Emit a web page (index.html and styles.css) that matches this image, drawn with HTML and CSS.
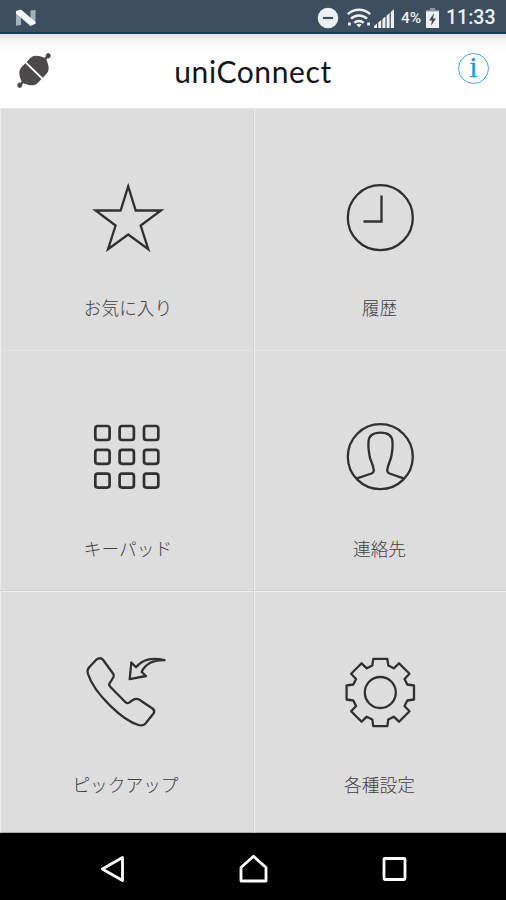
FILE: index.html
```html
<!DOCTYPE html>
<html lang="ja">
<head>
  <meta charset="UTF-8" />
  <meta name="viewport" content="width=device-width, initial-scale=1.0" />
  <title>uniConnect</title>
  <link rel="stylesheet" href="styles.css">
</head>
<body>
  <!-- Status bar -->
  <div class="status-bar">
    <svg class="n-logo" width="22" height="18" viewBox="0 0 22 18">
      <path fill="#a3b1bb" d="M1 2.500 6 1v15l-5 .8zM15.500 1.500 20.500 1v13.500l-5 2z" />
      <path fill="#f2f6f8" d="M1 2 6 .5 20.500 13v1.500l-5 2.500L1 4.500z" />
    </svg>
    <div class="status-icons">
      <svg width="22" height="22" viewBox="0 0 22 22">
        <circle cx="11" cy="11" r="10.300" fill="#edf1f3" />
        <path stroke="#3f4f5d" stroke-width="2.200" d="M6 11h10" />
      </svg>
      <svg class="wifi" width="24" height="20" viewBox="0 0 24 20">
        <g fill="none" stroke="#edf1f3" stroke-width="2.500">
          <path d="M.8 6.200C7 .2 17 .2 23.200 6.200" />
          <path d="M4 10.700c4.500-4.300 11.500-4.300 16 0" />
          <path d="M7.300 14.800c2.600-2.500 6.800-2.500 9.400 0" />
        </g>
        <path fill="#edf1f3" d="M9.300 16.600c1.600-1.200 3.800-1.200 5.400 0L12 19.500zM1 14.500h2.800v3H1zM20.200 14.500H23v3h-2.800z" />
      </svg>
      <svg class="signal" width="20" height="20" viewBox="0 0 20 20">
        <path fill="#edf1f3" d="M0 20v-2l3-2.500V20zM4.200 20v-5.500l3-2.500v8zM8.400 20v-9l3-2.500V20zM12.600 20V7.500l3-2.500v15zM16.800 20V4L20 1.300V20z" />
      </svg>
      <span class="battery-level">4%</span>
      <svg class="battery" width="13" height="20" viewBox="0 0 13 20">
        <path fill="#8997a2" d="M4 0h5v2h4v3H0V2h4z" />
        <path fill="#edf1f3" d="M0 3.500h13V20H0z" />
        <path fill="#3f4f5d" d="M8 5 3 12.500h3L4.800 18 10 10.500H7z" />
      </svg>
      <span class="clock">11:33</span>
    </div>
  </div>

  <!-- Header -->
  <div class="header">
    <svg class="plug" width="38" height="38" viewBox="0 0 38 38">
      <g transform="translate(19 20.500) rotate(-46)" fill="#4b494a">
        <path d="M-20-1.200h3.500C-14-7-11.500-11.300-6-11.300h5v22.600h-5C-11.500 11.300-14 7-16.500 1.200H-20zM20-1.200h-3.500C14-7 11.500-11.300 6-11.300H1v22.600h5c5.500 0 8-4.300 10.500-10.100H20z" />
        <circle cx="-20.500" cy="0" r="2.500" />
        <circle cx="20.500" cy="0" r="2.500" />
      </g>
    </svg>
    <h1>uniConnect</h1>
    <div class="info">i</div>
  </div>

  <!-- Main menu -->
  <div class="menu">
    <div class="tile">
      <svg class="icon" viewBox="0 0 80 80">
        <path class="sharp" d="M40.200 8.300 47.700 32.500H73L52.700 47.500 60.300 71.300 40.200 56.500 20 71.300 27.600 47.500 7.500 32.500H32.600z" />
      </svg>
      <span>お気に入り</span>
    </div>
    <div class="tile">
      <svg class="icon" viewBox="0 0 80 80">
        <circle cx="40.300" cy="39.700" r="32.500" />
        <path class="sharp" d="M41.500 17.500V43.500H23.500" />
      </svg>
      <span>履歴</span>
    </div>
    <div class="tile">
      <svg class="icon keypad" viewBox="0 0 80 80">
        <rect x="7.300" y="9" width="14.300" height="14" rx="2.500" />
        <rect x="31.600" y="9" width="14.300" height="14" rx="2.500" />
        <rect x="56" y="9" width="14.300" height="14" rx="2.500" />
        <rect x="7.300" y="32.800" width="14.300" height="14" rx="2.500" />
        <rect x="31.600" y="32.800" width="14.300" height="14" rx="2.500" />
        <rect x="56" y="32.800" width="14.300" height="14" rx="2.500" />
        <rect x="7.300" y="56.600" width="14.300" height="14" rx="2.500" />
        <rect x="31.600" y="56.600" width="14.300" height="14" rx="2.500" />
        <rect x="56" y="56.600" width="14.300" height="14" rx="2.500" />
      </svg>
      <span>キーパッド</span>
    </div>
    <div class="tile">
      <svg class="icon" viewBox="0 0 80 80">
        <circle cx="40.300" cy="39.700" r="32.500" />
        <path d="M17 61.300 31.500 56.500Q34 55.500 33.700 53C33.300 47.500 30 43 29.500 38.500L28.700 33Q28.200 29 28.500 25.500C28.500 18.500 33 15.700 40.500 15.700S52.500 18.500 52.500 25.500Q52.800 29 52.300 33L51.500 38.500C51 43 47.700 47.500 47.300 53Q47 55.500 49.500 56.500L63.500 61.300" />
      </svg>
      <span>連絡先</span>
    </div>
    <div class="tile">
      <svg class="icon" viewBox="0 0 80 80">
        <path d="M8.500 7.500Q12.500 4.800 15 7.800L25 21.500Q26.300 23.200 25.500 25L22.500 30Q20 32.500 22 34.500L37.500 50.200Q39.500 52 41.500 50.300L45 48Q48 46 51 47.500L64.500 56.500Q67.500 58.800 65.500 61.500L57.500 71.500Q55 74.300 50.500 73C35 68.500 6.500 42 0 22Q-1.200 18 1 15.500z" />
        <path d="M41.700 27.200 43.300 10.500 48 15.300C55 7.500 63 5.200 76.500 8.200 64 8 57 12.500 53.700 20L58 24z" />
      </svg>
      <span class="narrow">ピックアップ</span>
    </div>
    <div class="tile">
      <svg class="icon" viewBox="0 0 80 80">
        <g transform="translate(40.300 40.500)">
          <circle r="15.500" />
          <path d="M-7-33.700H7L8-27 13.500-24.200 18.700-29.200 29.200-18.700 24.200-13.500 27-8 33.700-7V7L27 8 24.200 13.500 29.200 18.700 18.700 29.200 13.500 24.200 8 27 7 33.700H-7L-8 27-13.500 24.200-18.700 29.200-29.200 18.700-24.200 13.500-27 8-33.700 7V-7L-27-8-24.200-13.500-29.200-18.700-18.700-29.200-13.500-24.200-8-27z" />
        </g>
      </svg>
      <span>各種設定</span>
    </div>
  </div>

  <!-- Navigation bar -->
  <div class="nav-bar">
    <svg width="30" height="30" viewBox="0 0 30 30"><path d="M5.300 15 25.500 3.500v23z" /></svg>
    <svg width="30" height="30" viewBox="0 0 30 30"><path d="M15.500 2.300 28 13.500V27H3V13.500z" /></svg>
    <svg width="30" height="30" viewBox="0 0 30 30"><rect x="5" y="4.500" width="21" height="21" rx="1" /></svg>
  </div>
</body>
</html>
```
FILE: styles.css
```css
body {
  margin: 0;
  height: 900px;
  display: flex;
  flex-direction: column;
  overflow: hidden;
  background: #000;
  font-family: Roboto, 'Noto Sans CJK JP', sans-serif;
}

svg {
  display: block;
  flex: none;
}

.status-bar {
  box-sizing: border-box;
  height: 34px;
  display: flex;
  justify-content: space-between;
  align-items: center;
  padding: 0 11px 0 15px;
  background: #3d4f5e;
  border-bottom: 2px solid #173c54;
  color: #edf1f3;
}

.n-logo {
  margin-top: 3px;
}

.status-icons {
  display: flex;
  align-items: center;
  padding-top: 3px;
}

.wifi {
  margin-left: 8px;
}

.signal {
  margin-left: 3px;
}

.battery-level {
  width: 25px;
  margin-left: 7px;
  font-size: 15.5px;
  line-height: 20px;
  font-weight: 500;
}

.clock {
  width: 49px;
  margin-left: 7px;
  font-size: 19.5px;
  line-height: 20px;
  font-weight: 500;
}

.header {
  box-sizing: border-box;
  height: 74px;
  display: flex;
  justify-content: space-between;
  align-items: center;
  padding: 0 17px 4px 15px;
  background: linear-gradient(#e4e4e4, #f6f6f6 8px, #fff 18px);
}

.header h1 {
  margin: 4px 5px 0 0;
  font-family: Lato, sans-serif;
  font-size: 30px;
  font-weight: 400;
  line-height: 36px;
  letter-spacing: 0.6px;
  color: #161616;
}

.plug {
  overflow: visible;
}

.info {
  box-sizing: border-box;
  width: 31px;
  height: 31px;
  margin-top: -1px;
  border: 1.5px solid #42a5e2;
  border-radius: 50%;
  font-family: 'Liberation Serif', serif;
  font-size: 29px;
  line-height: 27px;
  text-align: center;
  color: #1b98e2;
  -webkit-text-stroke: 0.4px #1b98e2;
}

.menu {
  height: 725px;
  display: grid;
  grid-template-columns: 254px 252px;
  grid-template-rows: 242px 241px 242px;
  background: #ddd;
}

.tile {
  box-sizing: border-box;
  display: flex;
  flex-direction: column;
  align-items: center;
  padding-top: 69px;
  border-top: 1px solid #e4e4e4;
  color: #404040;
}

.tile:nth-child(odd) {
  padding-left: 2px;
  border-left: 1px solid #eee;
  border-right: 1px solid #d0d0d0;
}

.tile:nth-child(even) {
  padding-right: 2px;
  border-left: 1px solid #f0f0f0;
}

.tile:nth-child(n+3) {
  padding-top: 66px;
}

.tile:nth-child(n+5) {
  padding-top: 60px;
  border-top: 1px solid #f0f0f0;
  border-bottom: 1px solid #aaa;
  box-shadow: 0 -1px 0 #d0d0d0;
}

.tile span {
  margin-top: 38px;
  font-size: 17.7px;
  font-weight: 300;
  line-height: 26px;
  white-space: nowrap;
}

.tile:nth-child(n+3) span {
  margin-top: 40px;
}

.tile:nth-child(n+5) span {
  margin-top: 41px;
}

.tile .narrow {
  margin-right: 5px;
}

.icon {
  width: 80px;
  height: 80px;
  overflow: visible;
  fill: none;
  stroke: #303030;
  stroke-width: 2.3;
  stroke-linejoin: round;
}

.icon .sharp {
  stroke-linejoin: miter;
}

.keypad {
  stroke-width: 2.7;
}

.nav-bar {
  flex: 1;
  display: flex;
  justify-content: center;
  gap: 111px;
  padding-top: 21px;
  background: #000;
}

.nav-bar svg {
  fill: none;
  stroke: #fff;
  stroke-width: 2.8;
  stroke-linejoin: round;
}
```
